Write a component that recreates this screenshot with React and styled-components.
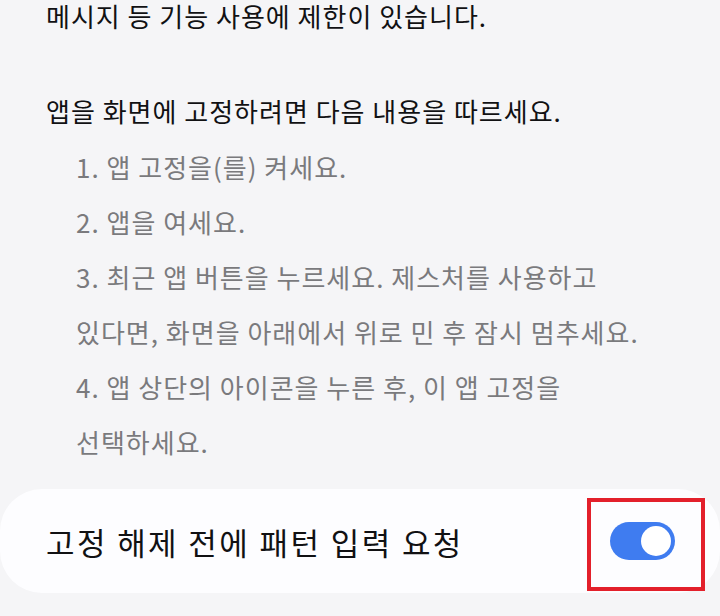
import React, { useState } from 'react';
import styled, { createGlobalStyle } from 'styled-components';

const GlobalStyle = createGlobalStyle`
  html, body {
    margin: 0;
    padding: 0;
    background: #f5f5f7;
    overflow: hidden;
  }
  body {
    font-family: "Noto Sans CJK KR", "Noto Sans", sans-serif;
    -webkit-font-smoothing: antialiased;
  }
`;

const Screen = styled.div`
  width: 720px;
  height: 616px;
  overflow: hidden;
  display: flex;
  flex-direction: column;
`;

const Intro = styled.div`
  padding-left: 46px;
  font-size: 26px;
  letter-spacing: 1px;
  color: #111113;
`;

const Para = styled.p`
  margin: 0;
  line-height: ${p => (p.$first ? '32px' : '47px')};
  min-height: ${p => (p.$blank ? '55px' : 'auto')};
`;

const Steps = styled.ol`
  list-style: none;
  margin: 5px 0 0;
  padding: 0 0 0 76px;
  width: 580px;
  font-size: 26px;
  line-height: 55px;
  letter-spacing: 1px;
  word-break: keep-all;
  color: #7a7a7d;
`;

const Step = styled.li`
  margin: 0;
`;

const Card = styled.div`
  margin-top: 20px;
  flex-shrink: 0;
  height: 104px;
  border-radius: 42px;
  background: #fdfdff;
  display: flex;
  align-items: center;
  justify-content: space-between;
  padding: 0 45px 0 46px;
`;

const CardLabel = styled.span`
  font-size: 31px;
  letter-spacing: 2.4px;
  color: #111113;
`;

const Marked = styled.div`
  position: relative;
  display: flex;
`;

// red annotation frame drawn over the switch
const Frame = styled.div`
  position: absolute;
  left: -23px;
  right: -30px;
  top: -24px;
  bottom: -31px;
  border: 4px solid #e3202b;
  pointer-events: none;
`;

const Switch = styled.button`
  width: 65px;
  height: 38px;
  border: none;
  padding: 4px;
  border-radius: 19px;
  background: ${p => (p.$on ? '#3f7cf0' : '#c8c8cc')};
  display: flex;
  justify-content: ${p => (p.$on ? 'flex-end' : 'flex-start')};
  align-items: center;
  cursor: pointer;
`;

const Knob = styled.span`
  width: 30px;
  height: 30px;
  border-radius: 50%;
  background: #ffffff;
`;

const steps = [
  '1. 앱 고정을(를) 켜세요.',
  '2. 앱을 여세요.',
  '3. 최근 앱 버튼을 누르세요. 제스처를 사용하고 있다면, 화면을 아래에서 위로 민 후 잠시 멈추세요.',
  '4. 앱 상단의 아이콘을 누른 후, 이 앱 고정을 선택하세요.',
];

export default function App() {
  const [locked, setLocked] = useState(true);
  return (
    <>
      <GlobalStyle />
      <Screen>
        <Intro>
          <Para $first>메시지 등 기능 사용에 제한이 있습니다.</Para>
          <Para $blank />
          <Para>앱을 화면에 고정하려면 다음 내용을 따르세요.</Para>
        </Intro>
        <Steps>
          {steps.map(s => (
            <Step key={s}>{s}</Step>
          ))}
        </Steps>
        <Card>
          <CardLabel>고정 해제 전에 패턴 입력 요청</CardLabel>
          <Marked>
            <Switch $on={locked} onClick={() => setLocked(!locked)}>
              <Knob />
            </Switch>
            <Frame />
          </Marked>
        </Card>
      </Screen>
    </>
  );
}
